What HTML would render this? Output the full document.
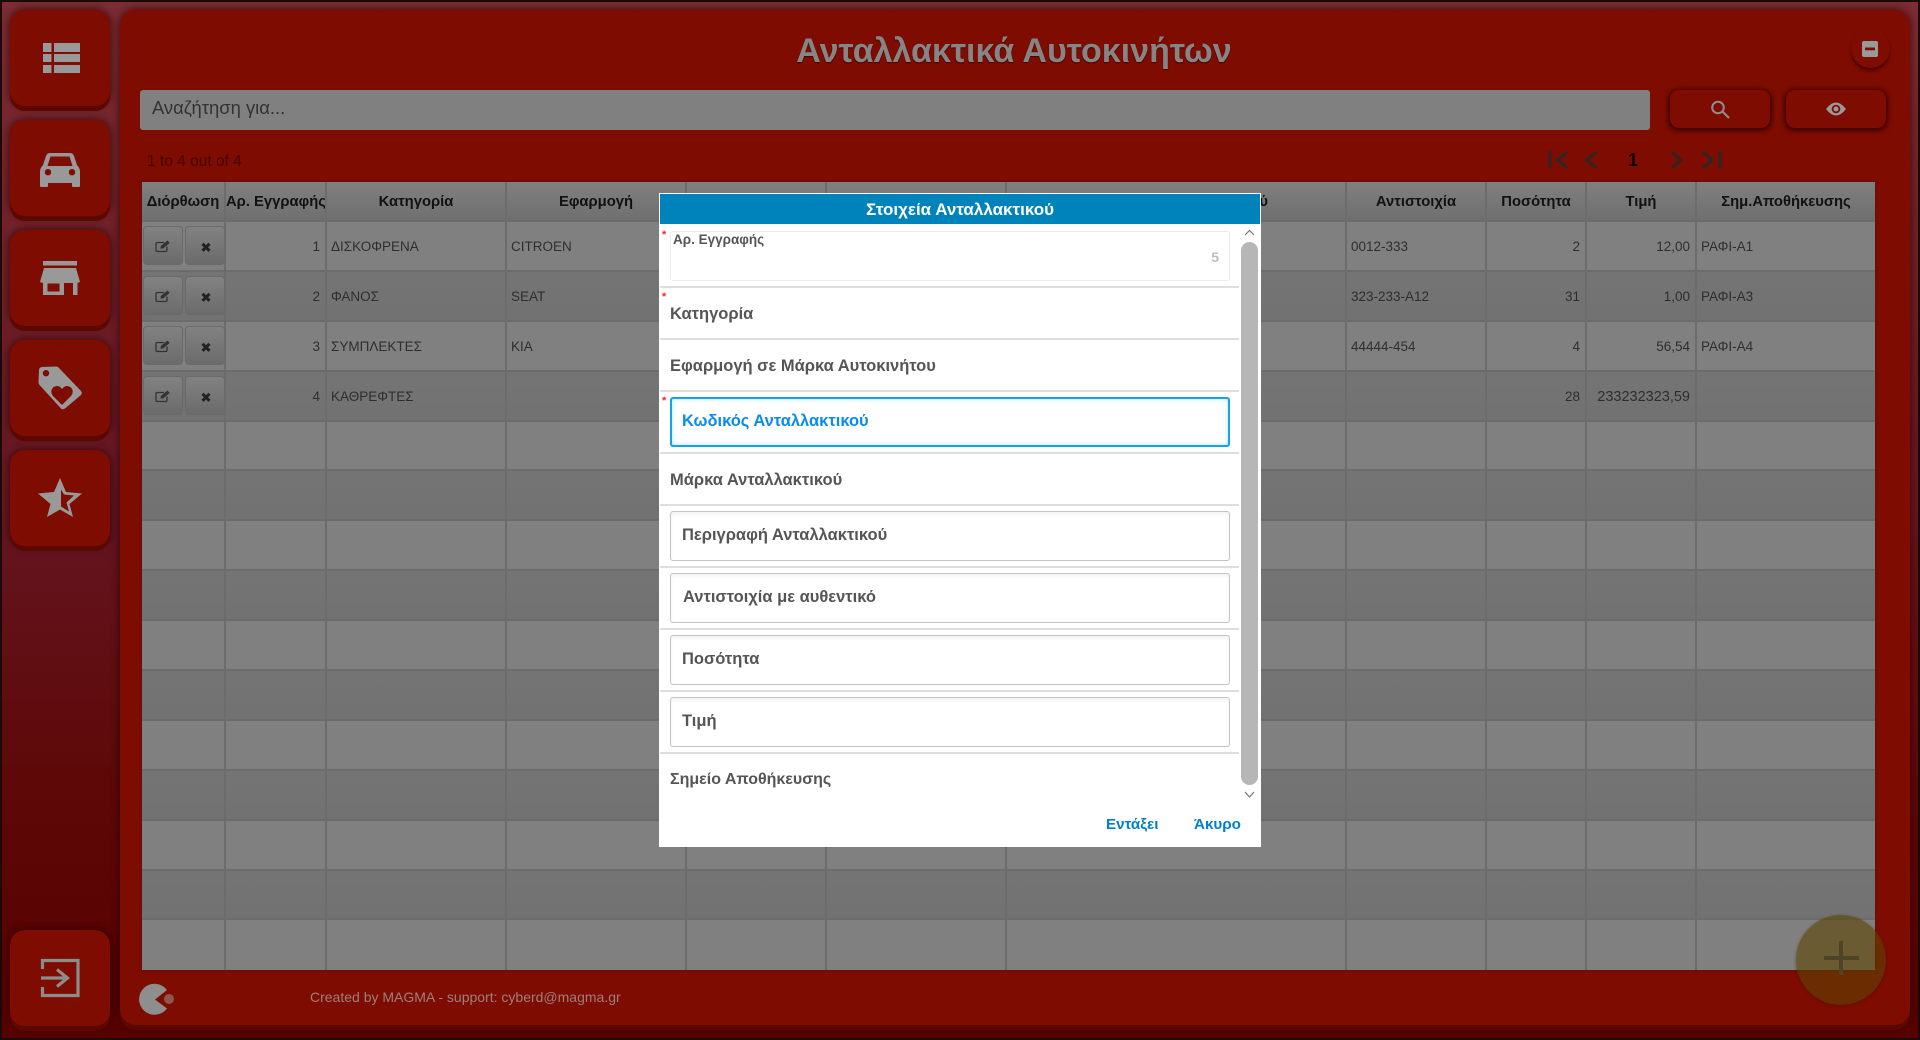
<!DOCTYPE html>
<html lang="el"><head><meta charset="utf-8"><title>Ανταλλακτικά Αυτοκινήτων</title>
<style>
*{box-sizing:border-box}
html,body{margin:0;padding:0;width:1920px;height:1040px;overflow:hidden}
body{position:relative;font-family:"Liberation Sans","DejaVu Sans",sans-serif;background:linear-gradient(#7c2c33 0,#701f28 25%,#641520 50%,#5e0808 75%,#560000 100%);box-shadow:inset 0 0 0 2px #1a0a0a}
.a{position:absolute}
.t{position:absolute;white-space:nowrap}
.side{position:absolute;left:10px;width:100px;height:96px;background:#7e0c00;border-radius:15px;box-shadow:0 5px 0 #5c0800,0 0 7px 2px rgba(40,0,0,.55)}
.main{position:absolute;left:120px;top:10px;width:1790px;height:1015px;background:#7e0c00;border-radius:16px;box-shadow:0 5px 0 #5c0800,0 0 7px 2px rgba(40,0,0,.55)}
.hbtn{position:absolute;top:90px;width:100px;height:38px;background:#7e0c00;border-radius:9px;box-shadow:0 1px 5px 2px rgba(50,0,0,.85)}
table{position:absolute;left:142px;top:182px;width:1733px;height:788px;border-collapse:separate;border-spacing:0;table-layout:fixed;font-size:13.5px;color:#2e2e2e;box-shadow:0 0 3px rgba(30,30,30,.6)}
td,th{border-right:2px solid #6c6c6c;border-bottom:2px solid #6c6c6c;padding:2px 4px 0;overflow:hidden;white-space:nowrap;height:49.9px;font-weight:normal}
td:last-child,th:last-child{border-right:0}
th{height:40px;background:linear-gradient(#808080,#6f6f6f);font-weight:bold;color:#111;padding:1px 0 0;font-size:14.8px;text-align:center}
tr:nth-child(even) td{background:#808080}
tr:nth-child(odd) td{background:linear-gradient(#747474,#727272)}
.r{text-align:right;padding-right:5px}
.eb{position:absolute;width:40px;height:39px;border:1px solid #6a6a6a;border-radius:4px;background:linear-gradient(#828282,#6b6b6b)}
.modal{position:absolute;left:659px;top:193px;width:602px;height:654px;background:#fff;border:1px solid #fff}
.mh{position:absolute;left:660px;top:194px;width:600px;height:30px;background:#0082ba;color:#fff;font-weight:bold;font-size:17px;line-height:31px;text-align:center}
.sep{position:absolute;left:660px;width:579px;height:2px;background:#dedede}
.fld{position:absolute;left:670px;width:560px;height:50px;border:1px solid #c4c4c4;border-radius:3px;box-shadow:inset 0 2px 3px rgba(0,0,0,.06)}
.lb{font-weight:bold;font-size:16.5px;color:#555;line-height:20px}
.st{position:absolute;left:662px;color:#f22;font-size:11px;line-height:10px;font-weight:bold}
</style></head><body>

<div class="side" style="top:10px"></div>
<div class="side" style="top:120px"></div>
<div class="side" style="top:230px"></div>
<div class="side" style="top:340px"></div>
<div class="side" style="top:450px"></div>
<div class="side" style="top:930px"></div>
<div class="main"></div>

<div class="t" style="left:714px;top:29px;width:600px;text-align:center;font-weight:bold;font-size:34px;line-height:44px;color:#858585;text-shadow:0 1px 1px #400">Ανταλλακτικά Αυτοκινήτων</div>

<div class="a" style="left:1851px;top:29px;width:39px;height:39px;border-radius:50%;box-shadow:0 3px 3px rgba(60,0,0,.75)"></div>

<div class="a" style="left:140px;top:90px;width:1510px;height:40px;background:#808080;border-radius:3px"></div>
<div class="t" style="left:152px;top:97px;font-size:18.4px;line-height:22px;color:#333">Αναζήτηση για...</div>
<div class="hbtn" style="left:1670px"></div>
<div class="hbtn" style="left:1786px"></div>

<div class="t" style="left:147px;top:153px;font-size:15.5px;line-height:18px;color:#420600">1 to 4 out of 4</div>
<div class="t" style="left:1623px;top:147px;width:20px;text-align:center;font-size:18px;font-weight:bold;line-height:26px;color:#0c0000">1</div>

<table>
<colgroup><col style="width:84px"><col style="width:101px"><col style="width:180px"><col style="width:180px"><col style="width:140px"><col style="width:180px"><col style="width:340px"><col style="width:140px"><col style="width:100px"><col style="width:110px"><col></colgroup>
<tr><th>Διόρθωση</th><th>Αρ. Εγγραφής</th><th>Κατηγορία</th><th>Εφαρμογή</th><th>Κωδικός</th><th>Μάρκα</th><th>Περιγραφή Ανταλλακτικού</th><th>Αντιστοιχία</th><th>Ποσότητα</th><th>Τιμή</th><th>Σημ.Αποθήκευσης</th></tr>
<tr><td></td><td class="r">1</td><td>ΔΙΣΚΟΦΡΕΝΑ</td><td>CITROEN</td><td></td><td></td><td></td><td>0012-333</td><td class="r">2</td><td class="r">12,00</td><td>ΡΑΦΙ-Α1</td></tr>
<tr><td></td><td class="r">2</td><td>ΦΑΝΟΣ</td><td>SEAT</td><td></td><td></td><td></td><td>323-233-A12</td><td class="r">31</td><td class="r">1,00</td><td>ΡΑΦΙ-Α3</td></tr>
<tr><td></td><td class="r">3</td><td>ΣΥΜΠΛΕΚΤΕΣ</td><td>KIA</td><td></td><td></td><td></td><td>44444-454</td><td class="r">4</td><td class="r">56,54</td><td>ΡΑΦΙ-Α4</td></tr>
<tr><td></td><td class="r">4</td><td>ΚΑΘΡΕΦΤΕΣ</td><td></td><td></td><td></td><td></td><td></td><td class="r">28</td><td class="r" style="font-size:14.5px">233232323,59</td><td></td></tr>
<tr><td></td><td></td><td></td><td></td><td></td><td></td><td></td><td></td><td></td><td></td><td></td></tr>
<tr><td></td><td></td><td></td><td></td><td></td><td></td><td></td><td></td><td></td><td></td><td></td></tr>
<tr><td></td><td></td><td></td><td></td><td></td><td></td><td></td><td></td><td></td><td></td><td></td></tr>
<tr><td></td><td></td><td></td><td></td><td></td><td></td><td></td><td></td><td></td><td></td><td></td></tr>
<tr><td></td><td></td><td></td><td></td><td></td><td></td><td></td><td></td><td></td><td></td><td></td></tr>
<tr><td></td><td></td><td></td><td></td><td></td><td></td><td></td><td></td><td></td><td></td><td></td></tr>
<tr><td></td><td></td><td></td><td></td><td></td><td></td><td></td><td></td><td></td><td></td><td></td></tr>
<tr><td></td><td></td><td></td><td></td><td></td><td></td><td></td><td></td><td></td><td></td><td></td></tr>
<tr><td></td><td></td><td></td><td></td><td></td><td></td><td></td><td></td><td></td><td></td><td></td></tr>
<tr><td></td><td></td><td></td><td></td><td></td><td></td><td></td><td></td><td></td><td></td><td></td></tr>
<tr><td style="border-bottom:0"></td><td style="border-bottom:0"></td><td style="border-bottom:0"></td><td style="border-bottom:0"></td><td style="border-bottom:0"></td><td style="border-bottom:0"></td><td style="border-bottom:0"></td><td style="border-bottom:0"></td><td style="border-bottom:0"></td><td style="border-bottom:0"></td><td style="border-bottom:0"></td></tr>
</table>

<div class="eb" style="left:143px;top:226px"></div><div class="eb" style="left:185px;top:226px"></div>
<div class="eb" style="left:143px;top:276px"></div><div class="eb" style="left:185px;top:276px"></div>
<div class="eb" style="left:143px;top:326px"></div><div class="eb" style="left:185px;top:326px"></div>
<div class="eb" style="left:143px;top:376px"></div><div class="eb" style="left:185px;top:376px"></div>

<div class="t" style="left:310px;top:987px;font-size:14px;line-height:20px;color:#9c7f7c">Created by MAGMA - support: cyberd@magma.gr</div>

<svg class="a" style="left:0;top:0" width="1920" height="1040" viewBox="0 0 1920 1040">
<!-- sidebar icons -->
<g fill="#999">
<rect x="43" y="43" width="8.5" height="9"/><rect x="54" y="43" width="26" height="9"/>
<rect x="43" y="54" width="8.5" height="8"/><rect x="54" y="54" width="26" height="8"/>
<rect x="43" y="65" width="8.5" height="8"/><rect x="54" y="65" width="26" height="8"/>
<path fill-rule="evenodd" d="M49.5 153H70.500Q73 153 74 156L77 165Q80 168 80 172V186Q80 187 79 187H73Q72 187 72 186V183H48V186Q48 187 47 187H41Q40 187 40 186V172Q40 168 43 165L46 156Q47 153 49.500 153ZM50.500 156.500L47.500 166H72.500L69.500 156.500ZM48 169A3.200 3.200 0 1 0 48 175.400A3.200 3.200 0 1 0 48 169ZM72 169A3.200 3.200 0 1 0 72 175.400A3.200 3.200 0 1 0 72 169Z"/>
<rect x="43" y="261" width="34" height="4.500"/>
<path d="M44 268H76L80 282Q78 283 76 283H44Q42 283 40 282Z"/>
<path fill-rule="evenodd" d="M43 283H64V295H43ZM47.500 283.500V291.500H59.500V283.500Z"/><rect x="73" y="283" width="4.500" height="12"/>
<path fill-rule="evenodd" d="M42 367L56 366.500Q58 366.500 59 368L81 391Q82.500 393 81 395L65 408.500Q62.500 410 61 408.500L39.500 385Q38.500 384 38.500 382L39 370Q39 367.500 42 367ZM46 370A3.200 3.200 0 1 0 46 376.400A3.200 3.200 0 1 0 46 370ZM62 405L53 396Q49.500 391.500 53 387.500Q58 384 62 389Q66 384 71 387.500Q74.500 391.500 71 396Z"/>
<path fill-rule="evenodd" d="M60 478L66 492L82 493.500L69.500 504L73 517L60 509.500L47 517L50.500 504L38 493.500L54 492ZM61 489.500V506.500L69 511.500L66.500 502.500L74 495.500L64 494.500Z"/>
</g>
<g fill="none" stroke="#8c8c8c" stroke-width="3.200">
<path d="M42.500 969V960.500H78V995.500H42.500V987"/><path d="M41 978H67M57 969.500L67.500 978L57 986.500"/>
</g>
<!-- header icons -->
<rect x="1862" y="41" width="16" height="16" rx="2" fill="#999"/><rect x="1865" y="47.500" width="10" height="2.800" fill="#7e0c00"/>
<g fill="none" stroke="#8e8e8e" stroke-width="2"><circle cx="1718" cy="107.500" r="5.800"/><path d="M1722.500 111.500L1729 118"/></g>
<path d="M1826 109Q1836 96 1846 109Q1836 122 1826 109Z" fill="#999"/><circle cx="1836" cy="109" r="4.300" fill="#7e0c00"/><circle cx="1836" cy="109" r="2.500" fill="#999"/>
<!-- pagination -->
<g fill="none" stroke="#2c2626" stroke-width="3">
<path d="M1550 151V168.500"/><path d="M1567 152L1558 160L1567 168"/><path d="M1596 152L1587 160L1596 168"/>
<path d="M1672 152L1681 160L1672 168"/><path d="M1703 152L1712 160L1703 168"/><path d="M1720 151V168.500"/>
</g>
<!-- row icons -->
<defs>
<g id="ed" fill="none" stroke="#333" stroke-width="1.300"><path d="M167 246.500V250Q167 251.500 165.500 251.500H157.500Q156 251.500 156 250V244Q156 242.500 157.500 242.500H164"/><path d="M160.500 248.500L160.800 246L167.500 240.500L169.700 243L163 248.500Z" fill="#333" stroke="none"/></g>
<path id="xx" d="M202.500 243.800L209.500 250.800M209.500 243.800L202.500 250.800" stroke="#222" stroke-width="3" fill="none"/>
</defs>
<use href="#ed"/><use href="#xx"/>
<use href="#ed" y="50"/><use href="#xx" y="50"/>
<use href="#ed" y="100"/><use href="#xx" y="100"/>
<use href="#ed" y="150"/><use href="#xx" y="150"/>
<!-- pacman -->
<path d="M167 990A15.500 15.500 0 1 0 167 1008.500L155 999.500Z" fill="#8e8e8e"/>
<circle cx="169" cy="999" r="5" fill="#8f5550"/>
</svg>

<!-- FAB -->
<div class="a" style="left:1796px;top:915px;width:90px;height:90px;border-radius:50%;background:rgba(93,66,0,.6);box-shadow:0 1px 3px rgba(40,20,0,.4)"></div>
<div class="a" style="left:1824px;top:956px;width:35px;height:4px;background:#4d4526"></div>
<div class="a" style="left:1839px;top:941px;width:4px;height:34px;background:#4d4526"></div>

<!-- modal -->
<div class="modal"></div>
<div class="mh">Στοιχεία Ανταλλακτικού</div>
<div class="sep" style="top:286px"></div>
<div class="sep" style="top:338px"></div>
<div class="sep" style="top:390px"></div>
<div class="sep" style="top:452px"></div>
<div class="sep" style="top:504px"></div>
<div class="sep" style="top:566px"></div>
<div class="sep" style="top:628px"></div>
<div class="sep" style="top:690px"></div>
<div class="sep" style="top:752px"></div>

<div class="st" style="top:230px">*</div>
<div class="st" style="top:292px">*</div>
<div class="st" style="top:396px">*</div>

<div class="fld" style="top:231px;border-color:#ececec;box-shadow:none"></div>
<div class="t lb" style="left:673px;top:230px;font-size:13.500px">Αρ. Εγγραφής</div>
<div class="t" style="left:1203px;top:247px;width:16px;text-align:right;font-size:14px;font-weight:bold;line-height:20px;color:#bdbdbd">5</div>

<div class="t lb" style="left:670px;top:304px">Κατηγορία</div>
<div class="t lb" style="left:670px;top:356px">Εφαρμογή σε Μάρκα Αυτοκινήτου</div>

<div class="fld" style="top:397px;border:2px solid #16a3e6;box-shadow:inset 0 0 4px rgba(22,163,230,.35)"></div>
<div class="t lb" style="left:682px;top:411px;color:#0a8cec">Κωδικός Ανταλλακτικού</div>

<div class="t lb" style="left:670px;top:470px">Μάρκα Ανταλλακτικού</div>

<div class="fld" style="top:511px"></div>
<div class="t lb" style="left:682px;top:525px">Περιγραφή Ανταλλακτικού</div>
<div class="fld" style="top:573px"></div>
<div class="t lb" style="left:683px;top:587px">Αντιστοιχία με αυθεντικό</div>
<div class="fld" style="top:635px"></div>
<div class="t lb" style="left:682px;top:649px">Ποσότητα</div>
<div class="fld" style="top:697px"></div>
<div class="t lb" style="left:682px;top:711px">Τιμή</div>
<div class="t lb" style="left:670px;top:770px;font-size:16px">Σημείο Αποθήκευσης</div>

<div class="a" style="left:1241px;top:242px;width:17px;height:543px;background:#b6b6b6;border-radius:9px"></div>
<svg class="a" style="left:1241px;top:225px" width="17" height="14"><path d="M4 10L8.500 5.500L13 10" fill="none" stroke="#777" stroke-width="1.200"/></svg>
<svg class="a" style="left:1241px;top:788px" width="17" height="14"><path d="M4 4L8.500 9L13 4" fill="none" stroke="#777" stroke-width="1.200"/></svg>

<div class="t" style="left:1106px;top:815px;font-size:15.2px;font-weight:bold;line-height:20px;color:#0080c8">Εντάξει</div>
<div class="t" style="left:1194px;top:815px;font-size:15.2px;font-weight:bold;line-height:20px;color:#0080c8">Άκυρο</div>
</body></html>
